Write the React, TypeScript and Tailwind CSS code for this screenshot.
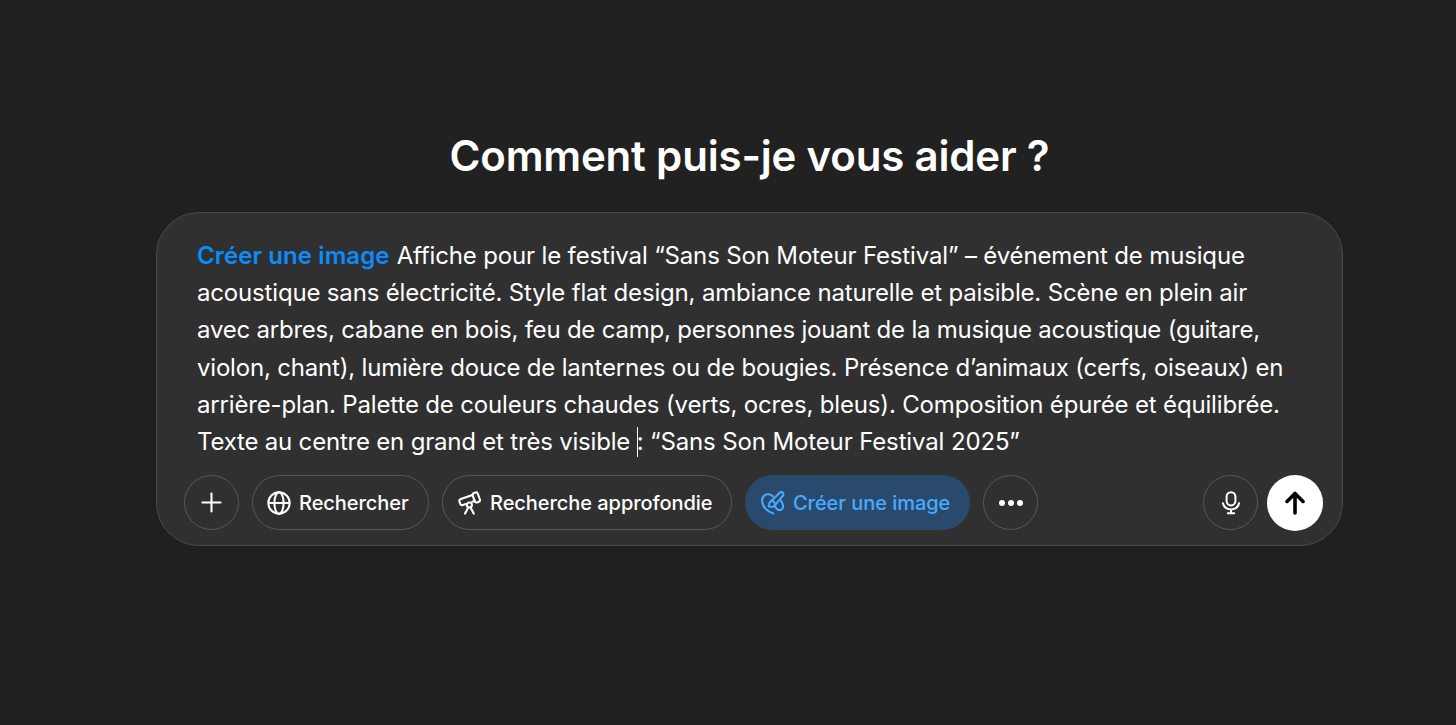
import { Plus } from 'lucide-react';
import type { ReactNode } from 'react';

interface PromptLine {
  text: string;
  tracking: string;
}

const PROMPT_LINES: PromptLine[] = [
  {
    text: 'acoustique sans électricité. Style flat design, ambiance naturelle et paisible. Scène en plein air',
    tracking: 'tracking-[-0.173px]',
  },
  {
    text: 'avec arbres, cabane en bois, feu de camp, personnes jouant de la musique acoustique (guitare,',
    tracking: 'tracking-[-0.22px]',
  },
  {
    text: 'violon, chant), lumière douce de lanternes ou de bougies. Présence d’animaux (cerfs, oiseaux) en',
    tracking: 'tracking-[-0.19px]',
  },
  {
    text: 'arrière-plan. Palette de couleurs chaudes (verts, ocres, bleus). Composition épurée et équilibrée.',
    tracking: 'tracking-[-0.16px]',
  },
];

function GlobeIcon() {
  return (
    <svg width="24" height="24" viewBox="0 0 24 24" fill="none" stroke="currentColor" strokeWidth="2">
      <circle cx="12" cy="12" r="10.7" />
      <ellipse cx="12" cy="12" rx="4.6" ry="10.7" />
      <path d="M1.2 12h21.6" />
    </svg>
  );
}

function TelescopeIcon() {
  return (
    <svg
      width="24"
      height="24"
      viewBox="0 0 24 24"
      fill="none"
      stroke="currentColor"
      strokeWidth="2.1"
      strokeLinecap="round"
      strokeLinejoin="round"
    >
      <path d="M14.4 3.9 2.9 8a2.3 2.3 0 0 0-1.4 2.9l.6 1.7A2.3 2.3 0 0 0 5 14l2.9-1M16.9 9.8l-2.6.9" />
      <path d="m15.6 2.2 1.9-.7a1.7 1.7 0 0 1 2.2 1l2.2 6a1.7 1.7 0 0 1-1 2.2l-1.9.7a1.7 1.7 0 0 1-2.2-1l-2.2-6a1.7 1.7 0 0 1 1-2.2Z" />
      <circle cx="11.4" cy="14" r="2.5" />
      <path d="m10.3 16.4-3.2 6.2M12.5 16.4l3.2 6.2" />
    </svg>
  );
}

function BrushIcon() {
  return (
    <svg
      width="24"
      height="24"
      viewBox="0 0 24 24"
      fill="none"
      stroke="currentColor"
      strokeWidth="2.1"
      strokeLinecap="round"
      strokeLinejoin="round"
    >
      <path d="M12.2 22.4C5.6 20.4 1.1 15.2 1.1 9.8c0-4 2.5-6.6 6-6.6 1.9 0 3.5.7 4.7 2" />
      <path d="m10 10.2 8.7-8.4a2.1 2.1 0 0 1 3.2 2.8l-7.7 9.2" />
      <path d="M14 14a3.2 3.2 0 0 0-4.1-3.8c-2.1.8-1.4 3-2.3 5 2.6 1.1 5.5.9 6.4-1.2Z" />
      <path d="M19.6 9.4c1.9 2.3 2.8 4.9 2.3 7.1-.7 2.7-3.7 3.4-5.7 1.8-.8-.6-1.3-1.3-1.8-2.2" />
    </svg>
  );
}

function MicIcon() {
  return (
    <svg width="20" height="24" viewBox="0 0 20 24" fill="none" stroke="currentColor" strokeWidth="2" strokeLinecap="round">
      <rect x="5.6" y="1.2" width="8.8" height="13.2" rx="4.4" />
      <path d="M1.9 12.3a8.4 8.4 0 0 0 16.2 0M10 18.4v3.8M6.8 22.3h6.4" />
    </svg>
  );
}

function SendIcon() {
  return (
    <svg
      width="24"
      height="24"
      viewBox="0 0 24 24"
      fill="none"
      stroke="currentColor"
      strokeWidth="3.6"
      strokeLinecap="round"
      strokeLinejoin="round"
    >
      <path d="M12 22V2.4M4 10.4l8-8 8 8" />
    </svg>
  );
}

function RoundButton({ label, children }: { label: string; children: ReactNode }) {
  return (
    <button
      aria-label={label}
      className="flex size-[55px] shrink-0 items-center justify-center rounded-full border border-[#585858]"
    >
      {children}
    </button>
  );
}

export default function App() {
  return (
    <div className="min-h-screen bg-[#212121] pt-[132px] font-['Inter',sans-serif] text-white">
      <div className="ml-[156px] w-[1187px]">
        <h1 className="text-center text-[42px] leading-[48px] font-semibold tracking-[-0.18px] whitespace-nowrap">
          Comment puis-je vous aider ?
        </h1>

        <div className="mt-[32px] h-[334px] rounded-[43px] border border-[#4a4a4a] bg-[#303030] px-[27px] pt-[24px] shadow-[0_4px_16px_rgba(0,0,0,0.08)]">
          <div className="pl-[13px] text-[24px] leading-[37.2px] whitespace-nowrap">
            <p className="tracking-[-0.155px]">
              <span className="mr-[7px] font-semibold tracking-[0.1px] text-[#0a8cff]">Créer une image</span>
              Affiche pour le festival “Sans Son Moteur Festival” – événement de musique
            </p>
            {PROMPT_LINES.map((line) => (
              <p key={line.text} className={line.tracking}>
                {line.text}
              </p>
            ))}
            <p className="flex items-center">
              <span className="whitespace-pre tracking-[-0.2px]">Texte au centre en grand et très visible </span>
              <span className="-mr-px h-[30px] w-px bg-white" />
              <span className="tracking-[-0.135px]">: “Sans Son Moteur Festival 2025”</span>
            </p>
          </div>

          <div className="mt-[15px] flex items-center text-[20px] font-medium">
            <RoundButton label="Ajouter">
              <Plus size={31} strokeWidth={1.6} />
            </RoundButton>
            <button className="ml-[13px] flex h-[55px] w-[177px] items-center gap-[8px] rounded-full border border-[#585858] pl-[14px] whitespace-nowrap">
              <GlobeIcon />
              <span className="pt-px tracking-[-0.05px]">Rechercher</span>
            </button>
            <button className="ml-[13px] flex h-[55px] w-[290px] items-center gap-[8px] rounded-full border border-[#585858] pl-[15px] whitespace-nowrap">
              <TelescopeIcon />
              <span className="pt-px tracking-[-0.05px]">Recherche approfondie</span>
            </button>
            <button className="ml-[13px] flex h-[55px] w-[225px] items-center gap-[8px] rounded-full bg-[#2a4a6d] pl-[16px] whitespace-nowrap text-[#48aaff]">
              <BrushIcon />
              <span className="pt-px tracking-[-0.05px]">Créer une image</span>
            </button>
            <div className="ml-[13px]">
              <RoundButton label="Plus d’options">
                <span className="flex gap-[3px]">
                  <span className="size-[6px] rounded-full bg-white" />
                  <span className="size-[6px] rounded-full bg-white" />
                  <span className="size-[6px] rounded-full bg-white" />
                </span>
              </RoundButton>
            </div>
            <div className="mr-[-8px] ml-auto flex items-center gap-[9px]">
              <RoundButton label="Dicter">
                <MicIcon />
              </RoundButton>
              <button
                aria-label="Envoyer"
                className="-my-px flex size-[56px] items-center justify-center rounded-full bg-white text-black"
              >
                <SendIcon />
              </button>
            </div>
          </div>
        </div>
      </div>
    </div>
  );
}
